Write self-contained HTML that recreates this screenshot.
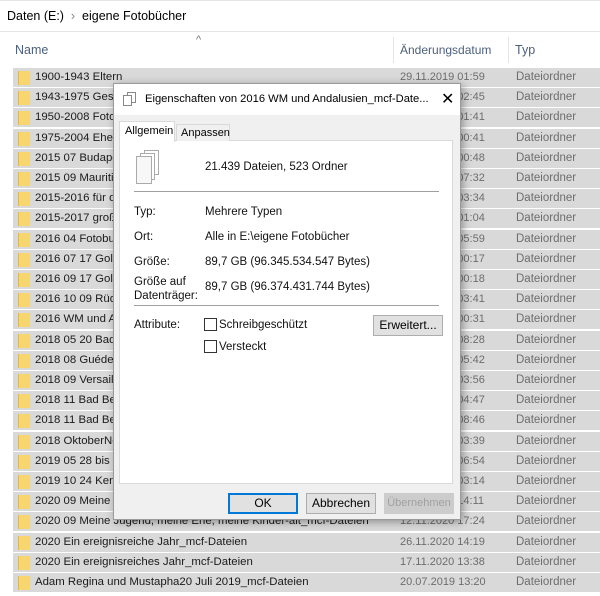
<!DOCTYPE html>
<html><head><meta charset="utf-8"><style>
*{margin:0;padding:0;box-sizing:border-box}
body{width:600px;height:596px;overflow:hidden;background:#fff;font-family:"Liberation Sans",sans-serif;font-size:12px;color:#000;position:relative}
.abs{position:absolute}
.row{position:absolute;left:13px;width:587px;height:19px;background:#d9d9d9}
.row .ic{position:absolute;left:5px;top:3px;width:12px;height:14px;background:#f8d66f;border-left:1px solid #e0b84a}
.row .n{position:absolute;left:22px;top:3px;font-size:11.4px;color:#1a1a1a;white-space:nowrap}
.row .d{position:absolute;left:387px;top:3px;color:#6d6d6d;font-size:11px}
.row .t{position:absolute;left:503px;top:3px;color:#6d6d6d;font-size:11.5px}
.dlg{position:absolute;left:113px;top:83px;width:348px;height:437px;background:#f0f0f0;border:1px solid #9a9a9a;box-shadow:2px 2px 8px rgba(0,0,0,.35)}
.btn{position:absolute;height:21px;border:1px solid #adadad;background:#e1e1e1;text-align:center;line-height:19px;font-size:12px}
.cb{position:absolute;width:13px;height:13px;border:1px solid #333;background:#fff}
.lbl{position:absolute;font-size:11.5px;color:#111;white-space:nowrap}
</style></head><body>
<div class="abs" style="left:0;top:0;width:600px;height:32px;border-bottom:1px solid #e5e5e5;border-top:1px solid #e5e5e5"></div>
<div class="abs" style="left:7px;top:9px;font-size:12.5px">Daten (E:)&nbsp;&nbsp;<span style="color:#888">›</span>&nbsp;&nbsp;eigene Fotobücher</div>
<div class="abs" style="left:196px;top:34px;color:#777;font-size:11px">^</div>
<div class="abs" style="left:15px;top:43px;color:#4c607a;font-size:12.5px">Name</div>
<div class="abs" style="left:393px;top:37px;width:1px;height:26px;background:#e5e5e5"></div>
<div class="abs" style="left:508px;top:37px;width:1px;height:26px;background:#e5e5e5"></div>
<div class="abs" style="left:400px;top:43px;color:#4c607a;font-size:12px">Änderungsdatum</div>
<div class="abs" style="left:515px;top:43px;color:#4c607a;font-size:12.5px">Typ</div>
<div id="rows"></div>
<script>
var r=[["1900-1943 Eltern","29.11.2019 01:59"],["1943-1975 Geschwister","29.11.2019 02:45"],["1950-2008 Fotos","29.11.2019 01:41"],["1975-2004 Ehe","29.11.2019 00:41"],["2015 07 Budapest","29.11.2019 00:48"],["2015 09 Mauritius","29.11.2019 07:32"],["2015-2016 für die","29.11.2019 03:34"],["2015-2017 großes","29.11.2019 01:04"],["2016 04 Fotobuch","29.11.2019 05:59"],["2016 07 17 Goldene","29.11.2019 00:17"],["2016 09 17 Goldene","29.11.2019 00:18"],["2016 10 09 Rüdiger","29.11.2019 03:41"],["2016 WM und Andalusien","29.11.2019 00:31"],["2018 05 20 Bad","29.11.2019 08:28"],["2018 08 Guédelon","29.11.2019 05:42"],["2018 09 Versailles","29.11.2019 03:56"],["2018 11 Bad Berka","29.11.2019 04:47"],["2018 11 Bad Berka","29.11.2019 08:46"],["2018 OktoberNeu","29.11.2019 03:39"],["2019 05 28 bis 1","29.11.2019 06:54"],["2019 10 24 Kenia","29.11.2019 03:14"],["2020 09 Meine Jugend","12.11.2020 14:11"],["2020 09 Meine Jugend, meine Ehe, meine Kinder-alt_mcf-Dateien","12.11.2020 17:24"],["2020 Ein ereignisreiche Jahr_mcf-Dateien","26.11.2020 14:19"],["2020 Ein ereignisreiches Jahr_mcf-Dateien","17.11.2020 13:38"],["Adam Regina und Mustapha20 Juli 2019_mcf-Dateien","20.07.2019 13:20"]];
var h="";for(var i=0;i<r.length;i++){h+='<div class="row" style="top:'+(68+i*20.2)+'px"><div class="ic"></div><div class="n">'+r[i][0]+'</div><div class="d">'+r[i][1]+'</div><div class="t">Dateiordner</div></div>';}
document.getElementById("rows").innerHTML=h;
</script>
<div class="dlg">
<div class="abs" style="left:0;top:0;width:346px;height:31px;background:#fff"></div>
<svg class="abs" style="left:9px;top:8px" width="14" height="15"><rect x="4.5" y="0.5" width="8" height="10" fill="#fff" stroke="#888"/><rect x="0.5" y="3.5" width="8" height="10" fill="#fff" stroke="#888"/></svg>
<div class="abs" style="left:31px;top:9px;font-size:11.2px;white-space:nowrap">Eigenschaften von 2016 WM und Andalusien_mcf-Date...</div>
<div class="abs" style="left:327px;top:5px;font-size:16px">✕</div>
<div class="abs" style="left:5px;top:56px;width:334px;height:344px;background:#fff;border:1px solid #d9d9d9"></div>
<div class="abs" style="left:5px;top:37px;width:56px;height:21px;background:#fff;border:1px solid #d9d9d9;border-bottom:none"></div>
<div class="abs" style="left:11px;top:41px;font-size:11px">Allgemein</div>
<div class="abs" style="left:62px;top:40px;width:54px;height:17px;background:#f0f0f0;border:1px solid #d9d9d9;border-bottom:none"></div>
<div class="abs" style="left:67px;top:43px;font-size:11px">Anpassen</div>
<svg class="abs" style="left:22px;top:66px" width="24" height="34"><rect x="8.5" y="0.5" width="14" height="24" fill="#fff" stroke="#aaa"/><rect x="4.5" y="3.5" width="14" height="26" fill="#fff" stroke="#aaa"/><rect x="0.5" y="6.5" width="15" height="27" fill="#f7f7f7" stroke="#aaa"/></svg>
<div class="lbl" style="left:91px;top:77px">21.439 Dateien, 523 Ordner</div>
<div class="abs" style="left:20px;top:107px;width:305px;height:1px;background:#a0a0a0"></div>
<div class="lbl" style="left:20px;top:122px">Typ:</div>
<div class="lbl" style="left:91px;top:122px">Mehrere Typen</div>
<div class="lbl" style="left:20px;top:147px">Ort:</div>
<div class="lbl" style="left:91px;top:147px">Alle in E:\eigene Fotobücher</div>
<div class="lbl" style="left:20px;top:172px">Größe:</div>
<div class="lbl" style="left:91px;top:172px">89,7 GB (96.345.534.547 Bytes)</div>
<div class="lbl" style="left:20px;top:191px;line-height:14px">Größe auf<br>Datenträger:</div>
<div class="lbl" style="left:91px;top:197px">89,7 GB (96.374.431.744 Bytes)</div>
<div class="abs" style="left:20px;top:221px;width:305px;height:1px;background:#a0a0a0"></div>
<div class="lbl" style="left:20px;top:235px">Attribute:</div>
<div class="cb" style="left:90px;top:234px"></div>
<div class="lbl" style="left:105px;top:235px">Schreibgeschützt</div>
<div class="cb" style="left:90px;top:256px"></div>
<div class="lbl" style="left:105px;top:257px">Versteckt</div>
<div class="btn" style="left:259px;top:231px;width:70px">Erweitert...</div>
<div class="btn" style="left:114px;top:409px;width:70px;border:2px solid #0078d7;line-height:17px">OK</div>
<div class="btn" style="left:192px;top:409px;width:70px">Abbrechen</div>
<div class="btn" style="left:270px;top:409px;width:70px;color:#a0a0a0;border-color:#ccc;background:#ccc;font-size:11px">Übernehmen</div>
</div>
</body></html>
